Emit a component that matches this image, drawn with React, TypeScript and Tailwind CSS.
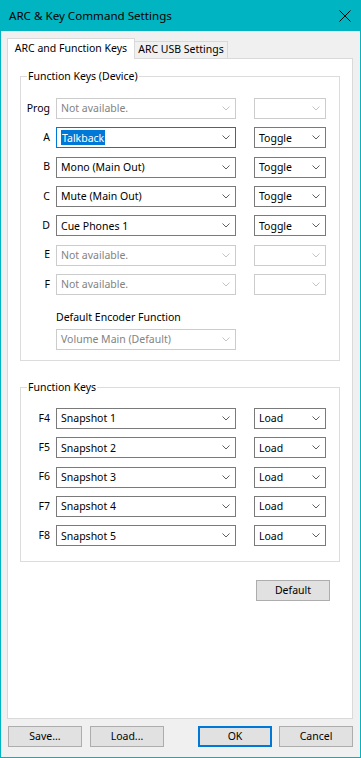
import React from "react";

const FONT = { fontFamily: "'Noto Sans', 'Segoe UI', sans-serif" };

function Chevron({ disabled }: { disabled?: boolean }) {
  return (
    <svg width="8" height="5" viewBox="0 0 8 5" className="shrink-0">
      <path
        d="M0.5 0.5 L4 4 L7.5 0.5"
        fill="none"
        stroke={disabled ? "#c4c4c4" : "#606060"}
        strokeWidth="1"
      />
    </svg>
  );
}

function Combo({
  text,
  width,
  disabled,
  focused,
  selected,
}: {
  text?: string;
  width: string;
  disabled?: boolean;
  focused?: boolean;
  selected?: boolean;
}) {
  const border = focused
    ? "border-[#0078d7]"
    : disabled
    ? "border-[#cccccc]"
    : "border-[#7a7a7a]";
  return (
    <div
      className={`${width} h-[21px] border ${border} bg-white flex items-center justify-between pl-[4px] pr-[5px] text-[10.5px] leading-none`}
    >
      <span
        className={
          selected
            ? "bg-[#0078d7] text-white px-[1px] h-[15px] flex items-center"
            : disabled
            ? "text-[#838383]"
            : "text-black"
        }
      >
        {text ?? ""}
      </span>
      <Chevron disabled={disabled} />
    </div>
  );
}

function Row({
  label,
  main,
  side,
  disabled,
  focused,
  selected,
}: {
  label: string;
  main?: string;
  side?: string;
  disabled?: boolean;
  focused?: boolean;
  selected?: boolean;
}) {
  return (
    <div className="flex items-center h-[21px]">
      <div className="w-[35px] text-right pr-[6px] text-[10.5px] text-black">{label}</div>
      <Combo text={main} width="w-[180px]" disabled={disabled} focused={focused} selected={selected} />
      <div className="w-[18px]" />
      <Combo text={side} width="w-[72px]" disabled={disabled} />
    </div>
  );
}

function Button({ label, primary, className }: { label: string; primary?: boolean; className?: string }) {
  return (
    <div
      className={`h-[21px] flex items-center justify-center text-[10.5px] text-black bg-[#e1e1e1] ${
        primary ? "border-2 border-[#0078d7]" : "border border-[#adadad]"
      } ${className ?? ""}`}
    >
      {label}
    </div>
  );
}

export default function App() {
  return (
    <div
      className="w-[361px] h-[758px] bg-[#f0f0f0] border border-[#00b4c2] flex flex-col"
      style={FONT}
    >
      {/* Title bar */}
      <div className="h-[30px] bg-[#00b4c2] flex items-center justify-between pl-[8px] pr-[8px] shrink-0">
        <span className="text-[11.6px] text-black">ARC &amp; Key Command Settings</span>
        <svg width="12" height="12" viewBox="0 0 12 12" className="mr-[1px]">
          <path d="M0.5 0.5 L11.5 11.5 M11.5 0.5 L0.5 11.5" stroke="#000" strokeWidth="1" />
        </svg>
      </div>

      {/* Body */}
      <div className="flex-1 flex flex-col px-[6px] pr-[7px] pt-[7px]">
        {/* Tabs */}
        <div className="flex items-end h-[20px] relative z-10">
          <div className="h-[21px] w-[128px] bg-white border border-b-0 border-[#d9d9d9] flex items-center justify-center pb-[1px] text-[10.5px] text-black -mb-[1px]">
            ARC and Function Keys
          </div>
          <div className="h-[17px] w-[93px] bg-[#f0f0f0] border border-l-0 border-b-0 border-[#d9d9d9] flex items-center justify-center text-[10.5px] text-black">
            ARC USB Settings
          </div>
        </div>

        {/* Panel */}
        <div className="h-[661px] bg-white border border-[#d9d9d9] flex flex-col px-[12px] pt-[9px]">
          {/* Group 1 */}
          <fieldset className="border border-[#dcdcdc] h-[293px] pt-[14px]">
            <legend className="ml-[6px] px-[1px] text-[10.5px] text-black leading-[16px]">Function Keys (Device)</legend>
            <div className="flex flex-col gap-[8.33px]">
              <Row label="Prog" main="Not available." disabled />
              <Row label="A" main="Talkback" side="Toggle" focused selected />
              <Row label="B" main="Mono (Main Out)" side="Toggle" />
              <Row label="C" main="Mute (Main Out)" side="Toggle" />
              <Row label="D" main="Cue Phones 1" side="Toggle" />
              <Row label="E" main="Not available." disabled />
              <Row label="F" main="Not available." disabled />
            </div>
            <div className="pl-[35px] mt-[14px] text-[10.5px] text-black leading-[16px]">Default Encoder Function</div>
            <div className="pl-[35px] mt-[4px]">
              <Combo text="Volume Main (Default)" width="w-[180px]" disabled />
            </div>
          </fieldset>

          {/* Group 2 */}
          <fieldset className="border border-[#dcdcdc] h-[183px] mt-[18px] pt-[13px]">
            <legend className="ml-[6px] px-[1px] text-[10.5px] text-black leading-[16px]">Function Keys</legend>
            <div className="flex flex-col gap-[8.33px]">
              <Row label="F4" main="Snapshot 1" side="Load" />
              <Row label="F5" main="Snapshot 2" side="Load" />
              <Row label="F6" main="Snapshot 3" side="Load" />
              <Row label="F7" main="Snapshot 4" side="Load" />
              <Row label="F8" main="Snapshot 5" side="Load" />
            </div>
          </fieldset>

          <div className="flex justify-end mt-[18px] pr-[10px]">
            <Button label="Default" className="w-[74px]" />
          </div>
        </div>

        {/* Bottom buttons */}
        <div className="flex items-center mt-[7px] pl-[1px]">
          <Button label="Save..." className="w-[74px]" />
          <Button label="Load..." className="w-[74px] ml-[8px]" />
          <div className="flex-1" />
          <Button label="OK" primary className="w-[74px]" />
          <Button label="Cancel" className="w-[74px] ml-[7px]" />
        </div>
      </div>
    </div>
  );
}
